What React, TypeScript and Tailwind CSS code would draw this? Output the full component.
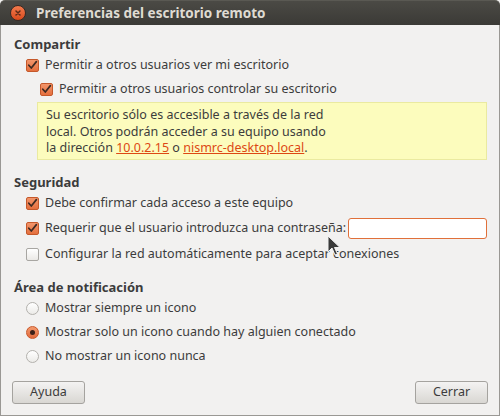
import React from "react";

const font = { fontFamily: '"Noto Sans", "DejaVu Sans", sans-serif' };

function Check({ checked }: { checked: boolean }) {
  if (!checked)
    return (
      <span className="w-[13px] h-[13px] rounded-[2px] border border-[#a8a6a2] bg-gradient-to-b from-[#ffffff] to-[#ebe9e6] shrink-0" />
    );
  return (
    <span className="w-[13px] h-[13px] rounded-[2px] border border-[#c5582a] bg-gradient-to-b from-[#f2956a] to-[#e46f3d] shrink-0 flex items-center justify-center">
      <svg width="11" height="11" viewBox="0 0 11 11">
        <path d="M1.8 5.2 L4.3 8 L9.4 1.6" fill="none" stroke="#3d2a22" strokeWidth="1.7" strokeLinecap="round" strokeLinejoin="round" />
      </svg>
    </span>
  );
}

function Radio({ checked }: { checked: boolean }) {
  if (!checked)
    return (
      <span className="w-[13px] h-[13px] rounded-full border border-[#b3b1ad] bg-gradient-to-b from-[#ffffff] to-[#ecebe8] shrink-0" />
    );
  return (
    <span className="w-[13px] h-[13px] rounded-full border border-[#c9582a] bg-gradient-to-b from-[#f39a6e] to-[#e2693a] shrink-0 flex items-center justify-center">
      <span className="w-[5px] h-[5px] rounded-full bg-[#3d2118]" />
    </span>
  );
}

function Row({ indent, children, control, h = "h-[24px]" }: { indent: string; children: React.ReactNode; control: React.ReactNode; h?: string }) {
  return (
    <div className={`${h} flex items-center gap-[6px] ${indent}`}>
      {control}
      <span className="text-[12.5px] text-[#3c3c3c] leading-none whitespace-nowrap">{children}</span>
    </div>
  );
}

function Heading({ children }: { children: React.ReactNode }) {
  return (
    <div className="h-[16px] flex items-center pl-[13px] text-[13px] font-bold text-[#3c3c3c] whitespace-nowrap">{children}</div>
  );
}

export default function App() {
  return (
    <div className="w-[500px] h-[416px] bg-[#f2f1f0] flex flex-col relative" style={font}>
      <div className="h-[25px] rounded-t-[5px] bg-gradient-to-b from-[#4b4a45] to-[#3b3a36] border-t border-[#5a5953] flex items-center pl-[10px] gap-[10px] shrink-0">
        <span className="w-[16px] h-[16px] rounded-full bg-gradient-to-b from-[#f27a4c] to-[#d9491a] border border-[#3a2a24] flex items-center justify-center">
          <svg width="8" height="8" viewBox="0 0 8 8">
            <path d="M2 2 L6 6 M6 2 L2 6" stroke="#5a2a18" strokeWidth="1.5" strokeLinecap="round" />
          </svg>
        </span>
        <span className="text-[13.5px] font-bold text-[#dfdbd2] whitespace-nowrap">Preferencias del escritorio remoto</span>
      </div>
      <div className="flex-1 border-x border-b border-[#9a9894] flex flex-col pt-[12px] pb-[11px]">
        <Heading>Compartir</Heading>
        <Row indent="pl-[25px]" control={<Check checked />}>Permitir a otros usuarios ver mi escritorio</Row>
        <Row indent="pl-[39px]" control={<Check checked />}>Permitir a otros usuarios controlar su escritorio</Row>
        <div className="mt-[1px] ml-[36px] mr-[12px] h-[58px] bg-[#fcfcbd] border border-[#eaeaa0] pl-[8px] pt-[4px] text-[12.5px] leading-[16.5px] text-[#3c3c3c]">
          <div>Su escritorio sólo es accesible a través de la red</div>
          <div>local. Otros podrán acceder a su equipo usando</div>
          <div>
            la dirección <span className="text-[#dd4814] underline">10.0.2.15</span> o{" "}
            <span className="text-[#dd4814] underline">nismrc-desktop.local</span>.
          </div>
        </div>
        <div className="h-[15px]" />
        <Heading>Seguridad</Heading>
        <Row indent="pl-[25px]" control={<Check checked />}>Debe confirmar cada acceso a este equipo</Row>
        <div className="h-[27px] flex items-center pl-[25px] pr-[12px]">
          <div className="flex items-center gap-[6px]">
            <Check checked />
            <span className="text-[12.5px] text-[#3c3c3c] leading-none whitespace-nowrap">Requerir que el usuario introduzca una contraseña:</span>
          </div>
          <div className="ml-auto w-[139px] h-[21px] rounded-[3px] border border-[#e0703a] bg-white" />
        </div>
        <Row indent="pl-[25px]" control={<Check checked={false} />}>Configurar la red automáticamente para aceptar conexiones</Row>
        <div className="h-[14px]" />
        <Heading>Área de notificación</Heading>
        <Row indent="pl-[25px]" control={<Radio checked={false} />}>Mostrar siempre un icono</Row>
        <Row indent="pl-[25px]" control={<Radio checked />}>Mostrar solo un icono cuando hay alguien conectado</Row>
        <Row indent="pl-[25px]" control={<Radio checked={false} />}>No mostrar un icono nunca</Row>
        <div className="flex-1" />
        <div className="flex justify-between px-[11px]">
          <button className="w-[73px] h-[23px] rounded-[3px] border border-[#a5a39f] bg-gradient-to-b from-[#f4f3f2] to-[#d9d7d3] text-[12.5px] text-[#3c3c3c]">Ayuda</button>
          <button className="w-[73px] h-[23px] rounded-[3px] border border-[#a5a39f] bg-gradient-to-b from-[#f4f3f2] to-[#d9d7d3] text-[12.5px] text-[#3c3c3c]">Cerrar</button>
        </div>
      </div>
      <svg className="absolute left-[327px] top-[235px]" width="14" height="22" viewBox="0 0 14 22">
        <path d="M1 1 L1 17 L5 13 L8 20 L10.5 19 L7.5 12.5 L13 12.5 Z" fill="#3a3a3a" stroke="#f2f2f2" strokeWidth="1" strokeLinejoin="round" />
      </svg>
    </div>
  );
}
